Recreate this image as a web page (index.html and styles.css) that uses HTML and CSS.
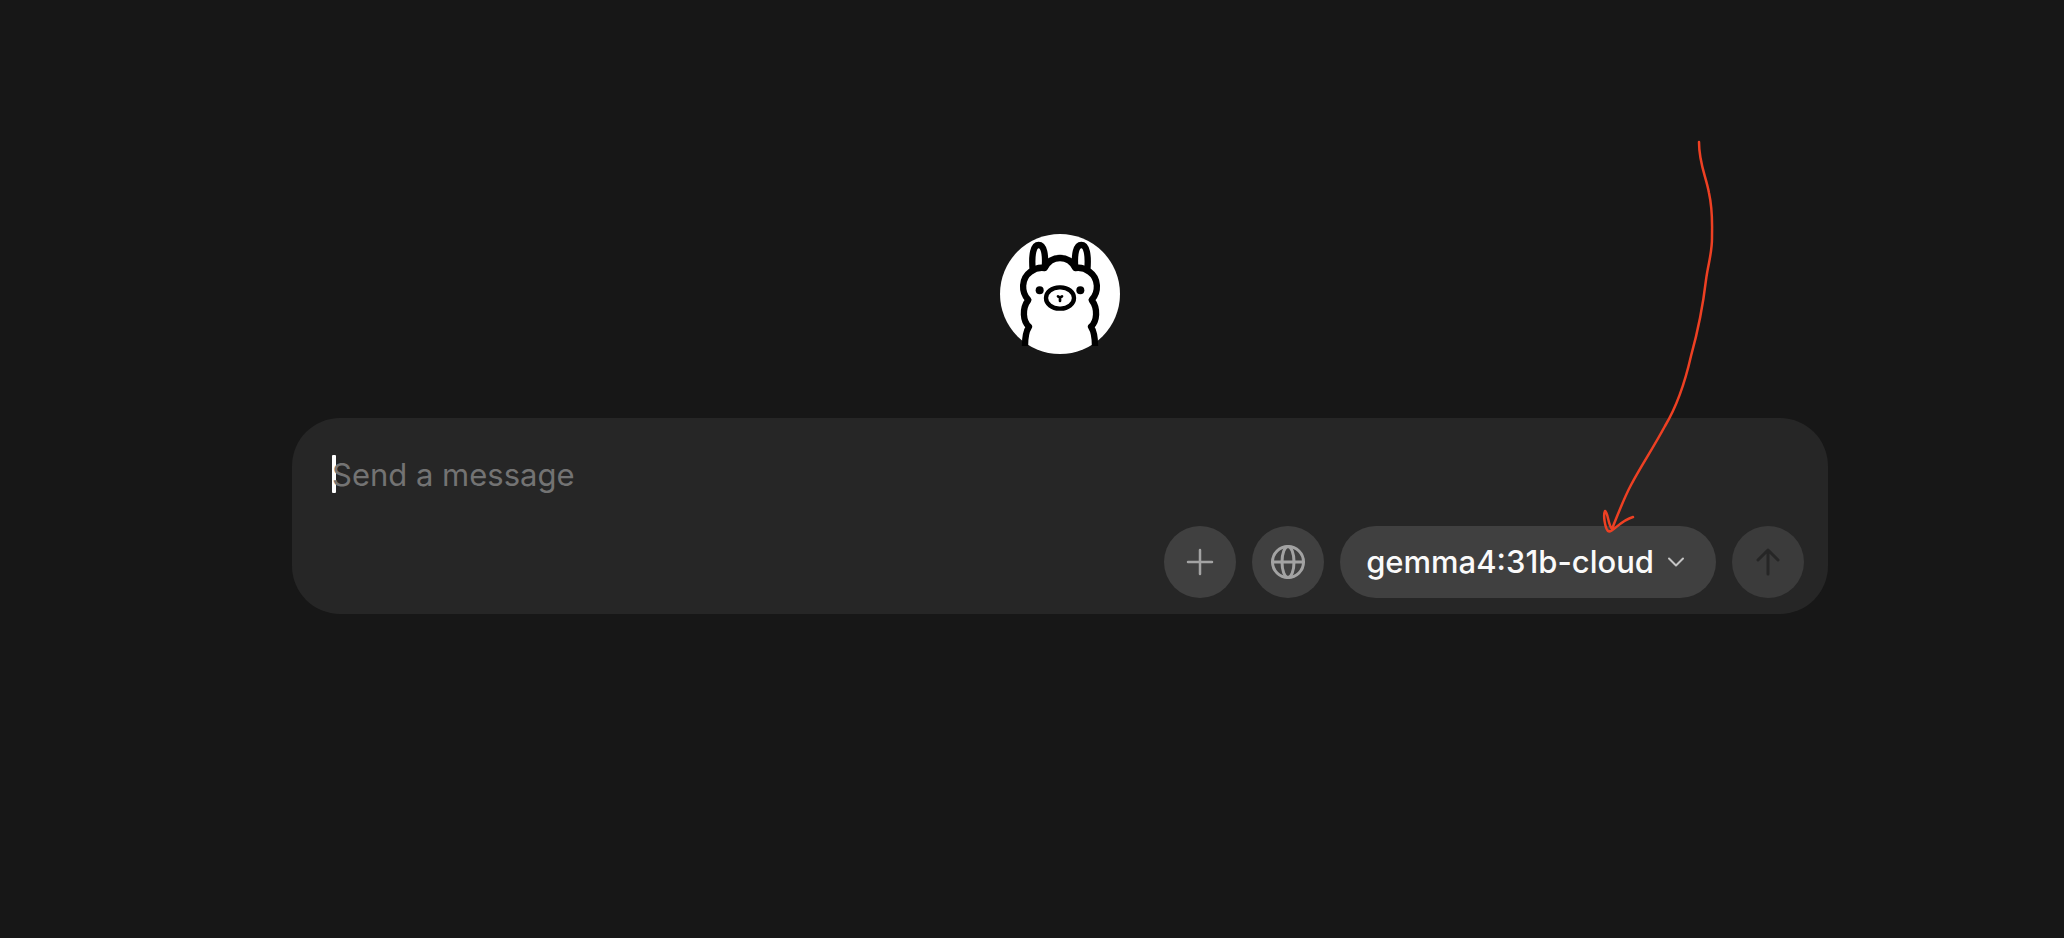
FILE: index.html
```html
<!DOCTYPE html>
<html lang="en">
<head>
<meta charset="utf-8">
<meta name="viewport" content="width=device-width, initial-scale=1">
<title>New chat</title>
<link rel="stylesheet" href="styles.css">
</head>
<body>
<main class="chat">
  <svg class="avatar" viewBox="30 30 360 360" role="img" aria-label="Llama logo">
    <circle cx="210" cy="210" r="180" fill="#fff"/>
    <g fill="none" stroke="#000" stroke-width="19" stroke-linejoin="round">
      <path d="M128 138C124 92 130 63 146 63S168 92 164 134"/>
      <path d="M292 138C296 92 290 63 274 63S252 92 256 134"/>
      <path d="M105 366C105 340 109 320 117 308C99 292 95 254 115 228C93 204 93 164 122 143C136 132 150 130 164 132C174 112 190 102 210 102S246 112 256 132C270 130 284 132 298 143C327 164 327 204 305 228C325 254 321 292 303 308C311 320 315 340 315 366"/>
      <rect x="168" y="190" width="84" height="64" rx="40" ry="32" stroke-width="13"/>
    </g>
    <circle cx="149" cy="199" r="12"/>
    <circle cx="271" cy="199" r="12"/>
    <path d="M204 217L210 221L216 217M210 221V231" fill="none" stroke="#000" stroke-width="8" stroke-linecap="round" stroke-linejoin="round"/>
  </svg>

  <form class="composer">
    <span class="caret"></span>
    <textarea class="message" rows="1" placeholder="Send a message" aria-label="Message"></textarea>
    <div class="actions">
      <button class="round" type="button" aria-label="Add attachment">
        <svg class="icon" viewBox="0 0 36 36"><path d="M18 6V30M6 18H30" stroke-width="2.500"/></svg>
      </button>
      <button class="round" type="button" aria-label="Web search">
        <svg class="icon" viewBox="0 0 36 36"><circle cx="18" cy="18" r="15.500"/><ellipse cx="18" cy="18" rx="6" ry="15.500"/><path d="M2.500 18H33.500"/></svg>
      </button>
      <button class="model" type="button" aria-haspopup="listbox">
        <span>gemma4:31b-cloud</span>
        <svg class="chevron" viewBox="0 0 20 20"><path d="M3 6.500L10 13.500L17 6.500"/></svg>
      </button>
      <button class="round send" type="submit" aria-label="Send" disabled>
        <svg class="icon" viewBox="0 0 36 36"><path d="M18 30V6M8 16L18 6L28 16"/></svg>
      </button>
    </div>
    <svg class="pointer" viewBox="0 0 120 400" aria-hidden="true">
      <path stroke-width="2.500" d="M99 4C99 26 106 38 109 55C113 73 112 84 112 100C112 116 108 126 106 142C102 176 96 200 91 218C86 240 77 268 65 288C52 312 41 328 31 347C24 360 18 376 12 391C8 387 8 374 5 373C3 377 5 390 8 393C12 396 19 383 33 379"/>
    </svg>
  </form>
</main>
</body>
</html>
```
FILE: styles.css
```css
* {
  box-sizing: border-box;
}

body {
  margin: 0;
  background: #171717;
  font-family: Inter, "Liberation Sans", sans-serif;
  font-size: 31px;
  line-height: 50px;
}

.chat {
  min-height: 100vh;
  padding: 0 0 90px 56px;
  display: flex;
  flex-direction: column;
  align-items: center;
  justify-content: center;
  gap: 64px;
}

.avatar {
  width: 120px;
  height: 120px;
}

.composer {
  position: relative;
  width: 100%;
  max-width: 1536px;
  padding: 32px 24px 16px 40px;
  display: flex;
  flex-direction: column;
  gap: 26px;
  border-radius: 48px;
  background: #262626;
}

.caret {
  position: absolute;
  top: 37px;
  left: 40px;
  width: 4px;
  height: 38px;
  border-radius: 1px;
  background: #fff;
}

.message {
  position: relative;
  width: 100%;
  height: 50px;
  padding: 0;
  border: 0;
  outline: 0;
  resize: none;
  overflow: hidden;
  background: transparent;
  color: #fff;
  font: inherit;
}

.message::placeholder {
  color: #737373;
  opacity: 1;
}

.actions {
  display: flex;
  justify-content: flex-end;
  gap: 16px;
}

.round,
.model {
  height: 72px;
  padding: 0;
  border: 0;
  border-radius: 36px;
  display: flex;
  align-items: center;
  justify-content: center;
  background: #404040;
  color: #a3a3a3;
  font: inherit;
}

.round {
  width: 72px;
}

.model {
  padding: 0 30px 0 26px;
  gap: 12px;
  color: #fafafa;
  font-weight: 500;
}

.send {
  background: #3b3b3b;
  color: #262626;
}

.icon,
.chevron,
.pointer {
  fill: none;
  stroke: currentColor;
  stroke-linecap: round;
  stroke-linejoin: round;
}

.icon {
  width: 36px;
  height: 36px;
  stroke-width: 3;
}

.chevron {
  width: 20px;
  height: 20px;
  color: #c4c4c4;
  stroke-width: 2;
}

.pointer {
  position: absolute;
  right: 108px;
  bottom: 76px;
  width: 120px;
  height: 400px;
  color: #ee4023;
  pointer-events: none;
}
```
